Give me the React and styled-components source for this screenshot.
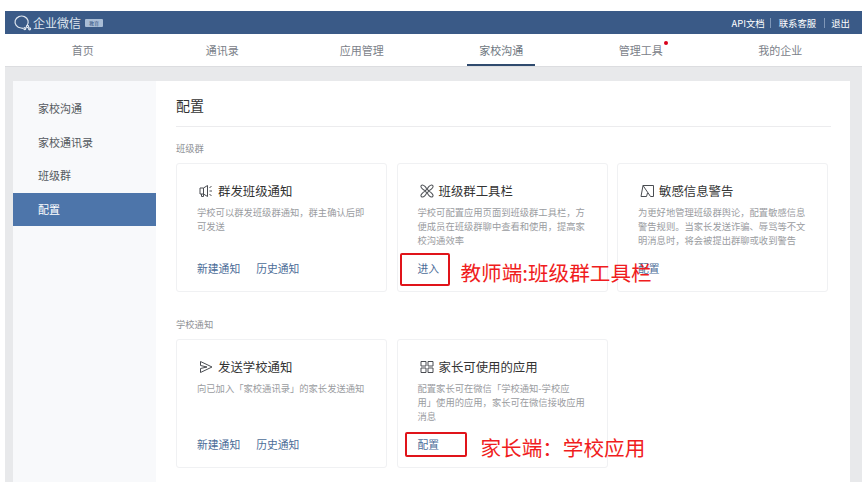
import React from "react";
import styled, { createGlobalStyle } from "styled-components";

const GlobalStyle = createGlobalStyle`
  html, body {
    margin: 0;
    padding: 0;
    background: #fff;
    font-family: "Noto Sans CJK SC", "Liberation Sans", sans-serif;
  }
`;

const Page = styled.div`
  width: 857px;
  padding: 11px 6px 0 5px;
`;

const TopBar = styled.div`
  height: 23px;
  background: #3a5a87;
  display: flex;
  align-items: center;
  justify-content: space-between;
  padding: 0 12px 0 8px;
  color: #fff;
`;

const Brand = styled.div`
  display: flex;
  align-items: center;
  font-size: 12px;
  color: #dfe6ef;
`;

const EduBadge = styled.span`
  width: 18px;
  height: 8px;
  margin-left: 4px;
  background: #a9bdd6;
  border-radius: 1px;
  color: #3a5a87;
  font-size: 5px;
  line-height: 8px;
  text-align: center;
`;

const TopLinks = styled.div`
  display: flex;
  align-items: center;
  font-size: 9.4px;
`;

const TopLink = styled.span`
  padding-left: ${(p) => p.$left}px;
  padding-right: ${(p) => p.$right}px;
  border-right: ${(p) => (p.$divider ? "1px solid #7f97b8" : "none")};
  line-height: 10px;
`;

const Nav = styled.nav`
  height: 32px;
  padding: 0 12px 0 8px;
  display: grid;
  grid-template-columns: repeat(6, 1fr);
`;

const NavItem = styled.div`
  position: relative;
  display: flex;
  align-items: center;
  justify-content: center;
  font-size: 11px;
  color: #7b8189;
`;

const NavLabel = styled.span`
  position: relative;
  height: 100%;
  display: flex;
  align-items: center;
  padding: 0 ${(p) => (p.$active ? 12 : 0)}px;
  color: ${(p) => (p.$active ? "#6d7680" : "inherit")};
  box-shadow: ${(p) => (p.$active ? "inset 0 -2px 0 #2f4a6e" : "none")};
`;

const RedDot = styled.i`
  position: absolute;
  right: -5px;
  top: 7px;
  width: 4px;
  height: 4px;
  border-radius: 50%;
  background: #d9001b;
`;

const Backdrop = styled.div`
  background: #e8e9eb;
  padding: 15px 12px 0 8px;
  box-shadow: inset 0 1px 0 #dcdde0;
`;

const Panel = styled.div`
  height: 401px;
  background: #fff;
  display: flex;
`;

const Sidebar = styled.aside`
  width: 142.5px;
  flex: none;
  padding-top: 11px;
  background: #f8f9fb;
`;

const SideItem = styled.div`
  height: 33.6px;
  line-height: 33.6px;
  padding-left: 25px;
  font-size: 11px;
  color: ${(p) => (p.$active ? "#fff" : "#555a60")};
  background: ${(p) => (p.$active ? "#4d75aa" : "transparent")};
`;

const Content = styled.main`
  flex: 1;
  padding: 0 19px 0 20.5px;
  min-width: 0;
`;

const PageTitle = styled.h1`
  margin: 0;
  height: 45px;
  line-height: 48px;
  font-size: 14px;
  font-weight: 400;
  color: #333;
  border-bottom: 1px solid #ececee;
`;

const SectionLabel = styled.div`
  font-size: 9.3px;
  line-height: 12px;
  color: #8f9296;
  margin-top: ${(p) => p.$top}px;
  margin-bottom: 9px;
`;

const CardGrid = styled.div`
  display: grid;
  grid-template-columns: repeat(3, 211px);
  column-gap: 9.5px;
`;

const Card = styled.div`
  position: relative;
  height: 127px;
  box-sizing: content-box;
  padding: 0 20px;
  width: 169px;
  border: 1px solid #f0f1f3;
  border-radius: 3px;
  background: #fff;
`;

const CardHead = styled.div`
  display: flex;
  align-items: center;
  height: 18px;
  margin-top: 18px;
  padding-left: 2px;
  color: #444;
`;

const CardTitle = styled.span`
  margin-left: 5px;
  font-size: 12.4px;
  color: #333;
`;

const CardText = styled.p`
  margin: 5px 0 0;
  height: 42px;
  font-size: 9.3px;
  line-height: 14px;
  color: #9a9c9f;
  white-space: pre-line;
`;

const CardLinks = styled.div`
  display: flex;
  gap: 16px;
  margin-top: 13px;
  font-size: 10.8px;
  line-height: 16px;
  color: #4c6d98;
`;

const Marker = styled.div`
  position: absolute;
  box-sizing: border-box;
  left: ${(p) => p.$left}px;
  top: ${(p) => p.$top}px;
  width: ${(p) => p.$w}px;
  height: ${(p) => p.$h}px;
  border: 2px solid #e0141a;
  border-radius: 2px;
`;

const Note = styled.div`
  position: absolute;
  z-index: 2;
  left: ${(p) => p.$left}px;
  top: ${(p) => p.$top}px;
  font-size: 20.6px;
  line-height: 28px;
  white-space: nowrap;
  color: #f01c20;
`;

const Logo = () => (
  <svg width="20" height="17" viewBox="0 0 20 17" fill="none" stroke="#dfe6ef" strokeWidth="1.2">
    <path d="M14 11.500A6.600 6 0 1 0 8 14l2 .4" />
    <circle cx="14.500" cy="12.500" r="1.100" />
    <circle cx="11.800" cy="14.600" r="1" />
    <circle cx="16.600" cy="14.800" r="1" />
  </svg>
);

const IconBox = ({ children }) => (
  <svg width="14" height="14" viewBox="0 0 14 14" fill="none" stroke="#4a4d52" strokeWidth="1">
    {children}
  </svg>
);

const Megaphone = () => (
  <IconBox>
    <path d="M1 4h3.500L8.500 1.500v11L4.500 10H1z" />
    <path d="M2.500 10v2.500h2V10M4.500 4v6" />
    <path d="M10.500 3.500l2-1M10.500 7h2.500M10.500 10.500l2 1" />
  </IconBox>
);

const Tools = () => (
  <IconBox>
    <ellipse cx="3.700" cy="3.700" rx="3.300" ry="1.800" transform="rotate(45 3.700 3.700)" />
    <ellipse cx="10.300" cy="3.700" rx="3.300" ry="1.800" transform="rotate(-45 10.300 3.700)" />
    <ellipse cx="3.700" cy="10.300" rx="3.300" ry="1.800" transform="rotate(-45 3.700 10.300)" />
    <ellipse cx="10.300" cy="10.300" rx="3.300" ry="1.800" transform="rotate(45 10.300 10.300)" />
  </IconBox>
);

const Flag = () => (
  <IconBox>
    <path d="M1 12.500L3 1.500h10.500v11H10.500L3 1.500" />
    <path d="M1 12.500h5.500L7.500 9" />
  </IconBox>
);

const Send = () => (
  <IconBox>
    <path d="M1.500 1.500L13 7 1.500 12.500V8.500L8 7 1.500 5.500z" />
  </IconBox>
);

const Apps = () => (
  <IconBox>
    <path d="M1 1.500h5v4.500H1zM8 1.500h5v4.500H8zM1 8h5v4.500H1zM8 8h5v4.500H8z" />
  </IconBox>
);

const navItems = ["首页", "通讯录", "应用管理", "家校沟通", "管理工具", "我的企业"];
const sideItems = ["家校沟通", "家校通讯录", "班级群", "配置"];

const groupCards = [
  {
    icon: <Megaphone />,
    title: "群发班级通知",
    text: "学校可以群发班级群通知\uFF0C群主确认后即\n可发送",
    links: ["新建通知", "历史通知"],
  },
  {
    icon: <Tools />,
    title: "班级群工具栏",
    text: "学校可配置应用页面到班级群工具栏\uFF0C方\n便成员在班级群聊中查看和使用\uFF0C提高家\n校沟通效率",
    links: ["进入"],
    marker: { left: 2, top: 89, w: 50, h: 33 },
    note: { left: 63, top: 94, text: "教师端:班级群工具栏" },
  },
  {
    icon: <Flag />,
    title: "敏感信息警告",
    text: "为更好地管理班级群舆论\uFF0C配置敏感信息\n警告规则。当家长发送诈骗、辱骂等不文\n明消息时\uFF0C将会被提出群聊或收到警告",
    links: ["配置"],
  },
];

const schoolCards = [
  {
    icon: <Send />,
    title: "发送学校通知",
    text: "向已加入「家校通讯录」的家长发送通知",
    links: ["新建通知", "历史通知"],
  },
  {
    icon: <Apps />,
    title: "家长可使用的应用",
    text: "配置家长可在微信「学校通知-学校应\n用」使用的应用\uFF0C家长可在微信接收应用\n消息",
    links: ["配置"],
    marker: { left: 7, top: 92, w: 62, h: 25 },
    note: { left: 83, top: 93, text: "家长端\uFF1A学校应用" },
  },
];

function ConfigCard({ card }) {
  return (
    <Card>
      <CardHead>
        {card.icon}
        <CardTitle>{card.title}</CardTitle>
      </CardHead>
      <CardText>{card.text}</CardText>
      <CardLinks>
        {card.links.map((link) => (
          <span key={link}>{link}</span>
        ))}
      </CardLinks>
      {card.marker && <Marker $left={card.marker.left} $top={card.marker.top} $w={card.marker.w} $h={card.marker.h} />}
      {card.note && (
        <Note $left={card.note.left} $top={card.note.top}>
          {card.note.text}
        </Note>
      )}
    </Card>
  );
}

export default function App() {
  return (
    <Page>
      <GlobalStyle />
      <TopBar>
        <Brand>
          <Logo />
          企业微信
          <EduBadge>教育</EduBadge>
        </Brand>
        <TopLinks>
          <TopLink $divider $left={0} $right={5}>API文档</TopLink>
          <TopLink $divider $left={8} $right={8}>联系客服</TopLink>
          <TopLink $left={6} $right={0}>退出</TopLink>
        </TopLinks>
      </TopBar>
      <Nav>
        {navItems.map((item) => (
          <NavItem key={item}>
            <NavLabel $active={item === "家校沟通"}>
              {item}
              {item === "管理工具" && <RedDot />}
            </NavLabel>
          </NavItem>
        ))}
      </Nav>
      <Backdrop>
        <Panel>
          <Sidebar>
            {sideItems.map((item) => (
              <SideItem key={item} $active={item === "配置"}>
                {item}
              </SideItem>
            ))}
          </Sidebar>
          <Content>
            <PageTitle>配置</PageTitle>
            <SectionLabel $top={15}>班级群</SectionLabel>
            <CardGrid>
              {groupCards.map((card) => (
                <ConfigCard key={card.title} card={card} />
              ))}
            </CardGrid>
            <SectionLabel $top={26}>学校通知</SectionLabel>
            <CardGrid>
              {schoolCards.map((card) => (
                <ConfigCard key={card.title} card={card} />
              ))}
            </CardGrid>
          </Content>
        </Panel>
      </Backdrop>
    </Page>
  );
}
